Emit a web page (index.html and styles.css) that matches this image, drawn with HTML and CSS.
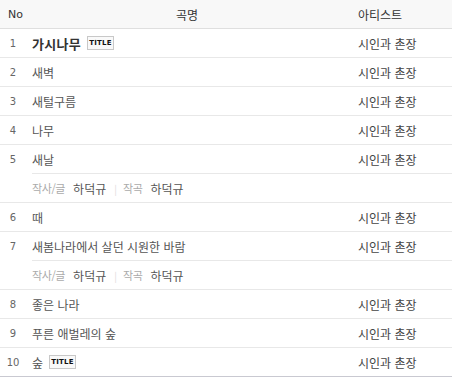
FILE: index.html
```html
<!DOCTYPE html>
<html lang="ko">
<head>
<meta charset="utf-8">
<link rel="stylesheet" href="styles.css">
</head>
<body>
<div class="list">
  <div class="row head">
    <div class="c-no">No</div>
    <div class="c-title">곡명</div>
    <div class="c-artist">아티스트</div>
  </div>
  <div class="row">
    <div class="c-no">1</div>
    <div class="c-title"><span class="name bold">가시나무</span><span class="badge">TITLE</span></div>
    <div class="c-artist">시인과 촌장</div>
  </div>
  <div class="row">
    <div class="c-no">2</div>
    <div class="c-title"><span class="name">새벽</span></div>
    <div class="c-artist">시인과 촌장</div>
  </div>
  <div class="row">
    <div class="c-no">3</div>
    <div class="c-title"><span class="name">새털구름</span></div>
    <div class="c-artist">시인과 촌장</div>
  </div>
  <div class="row">
    <div class="c-no">4</div>
    <div class="c-title"><span class="name">나무</span></div>
    <div class="c-artist">시인과 촌장</div>
  </div>
  <div class="row has-credit">
    <div class="c-no">5</div>
    <div class="c-title"><span class="name">새날</span></div>
    <div class="c-artist">시인과 촌장</div>
  </div>
  <div class="row credit">
    <div class="c-no"></div>
    <div class="c-credit"><span class="lbl">작사/글</span><span class="who">하덕규</span><span class="sep">|</span><span class="lbl">작곡</span><span class="who">하덕규</span></div>
  </div>
  <div class="row">
    <div class="c-no">6</div>
    <div class="c-title"><span class="name">때</span></div>
    <div class="c-artist">시인과 촌장</div>
  </div>
  <div class="row has-credit">
    <div class="c-no">7</div>
    <div class="c-title"><span class="name">새봄나라에서 살던 시원한 바람</span></div>
    <div class="c-artist">시인과 촌장</div>
  </div>
  <div class="row credit">
    <div class="c-no"></div>
    <div class="c-credit"><span class="lbl">작사/글</span><span class="who">하덕규</span><span class="sep">|</span><span class="lbl">작곡</span><span class="who">하덕규</span></div>
  </div>
  <div class="row">
    <div class="c-no">8</div>
    <div class="c-title"><span class="name">좋은 나라</span></div>
    <div class="c-artist">시인과 촌장</div>
  </div>
  <div class="row">
    <div class="c-no">9</div>
    <div class="c-title"><span class="name">푸른 애벌레의 숲</span></div>
    <div class="c-artist">시인과 촌장</div>
  </div>
  <div class="row last">
    <div class="c-no">10</div>
    <div class="c-title"><span class="name">숲</span><span class="badge">TITLE</span></div>
    <div class="c-artist">시인과 촌장</div>
  </div>
</div>
</body>
</html>
```

FILE: styles.css
```css
html, body {
  margin: 0;
  padding: 0;
  background: #fff;
}
body {
  font-family: "Noto Sans CJK KR", "Noto Sans", sans-serif;
  font-size: 12px;
  color: #333;
}
.list {
  width: 452px;
}
.row {
  display: grid;
  grid-template-columns: 32px 1fr 94px;
}
.row > div {
  height: 28px;
  display: flex;
  align-items: center;
  border-bottom: 1px solid #e8e8e8;
}
.head > div {
  background: #f8f8f8;
  border-bottom-color: #dfdfdf;
  color: #333;
}
.head .c-no {
  justify-content: flex-start;
  padding-left: 8px;
  font-family: "DejaVu Sans", sans-serif;
  font-size: 11px;
}
.head .c-title {
  justify-content: center;
  padding: 0 16px 0 0;
}
.c-no {
  justify-content: center;
  padding-right: 6px;
  font-family: "DejaVu Sans", sans-serif;
  font-size: 10px;
  color: #666;
}
.c-title {
  min-width: 0;
}
.c-artist {
  color: #444;
}
.name {
  font-size: 12px;
  color: #555;
}
.name.bold {
  font-size: 13px;
  font-weight: bold;
  color: #333;
  letter-spacing: 0.3px;
}
.badge {
  display: inline-block;
  margin-left: 6px;
  box-sizing: border-box;
  width: 27px;
  height: 14px;
  line-height: 12px;
  border: 1px solid #c8c8c8;
  background: #f9f9f9;
  font-family: "DejaVu Sans", sans-serif;
  font-size: 7px;
  font-weight: bold;
  color: #111;
  text-align: center;
  letter-spacing: 0.2px;
}
.has-credit .c-no {
  border-bottom-color: transparent;
}
.credit .c-credit {
  grid-column: 2 / 4;
}
.lbl {
  color: #aaa;
  font-size: 11px;
  letter-spacing: -0.4px;
}
.who {
  color: #555;
  font-size: 12px;
  margin-left: 8px;
}
.sep {
  color: #ddd;
  font-size: 10px;
  margin: 0 6px 0 8px;
}
.last > div {
  border-bottom-color: #c9c9d1;
}
```
